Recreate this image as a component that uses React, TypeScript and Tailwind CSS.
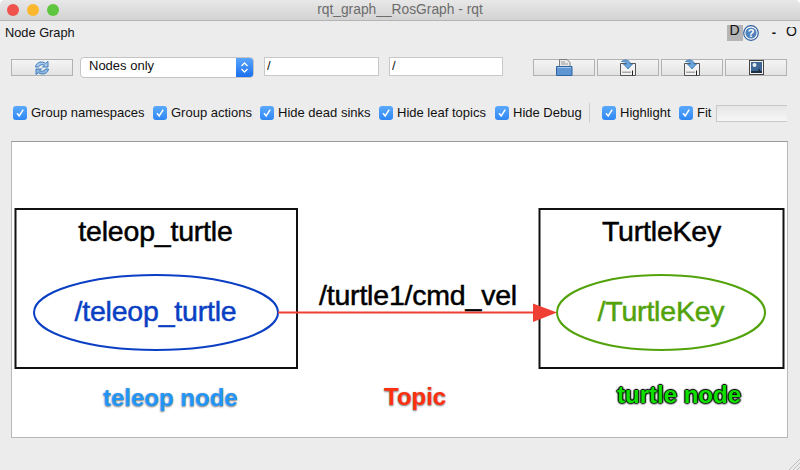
const uiFont = "font-['Liberation_Sans',Arial,sans-serif]";

const filters = [
  { label: 'Group namespaces', width: 'w-[140px]' },
  { label: 'Group actions', width: 'w-[107px]' },
  { label: 'Hide dead sinks', width: 'w-[119px]' },
  { label: 'Hide leaf topics', width: 'w-[116px]' },
  { label: 'Hide Debug', width: 'w-[94px]' },
];

function Checkbox({ label, className }: { label: string; className?: string }) {
  return (
    <div className={`flex items-center ${className ?? ''}`}>
      <span className="flex h-[14px] w-[14px] shrink-0 items-center justify-center rounded-[3px] bg-gradient-to-b from-[#5aa9fb] to-[#2f87f5]">
        <svg width="10" height="10" viewBox="0 0 10 10" fill="none">
          <path d="M2 5.2 4.2 8 8.2 1.6" stroke="#fff" strokeWidth="1.5" />
        </svg>
      </span>
      <span className="ml-[4px] -translate-y-px whitespace-nowrap text-[13px] leading-none text-[#111]">{label}</span>
    </div>
  );
}

function ToolButton({ children }: { children?: React.ReactNode }) {
  return (
    <button
      type="button"
      className="flex h-[17px] w-[62px] items-center justify-center overflow-visible border border-[#b2b2b2] bg-gradient-to-b from-[#f4f4f4] to-[#e3e3e3]"
    >
      {children}
    </button>
  );
}

function RefreshIcon() {
  return (
    <svg width="16" height="16" viewBox="0 0 16 16" fill="none" className="shrink-0">
      <path d="M1.500 7C2 3 6 1 10 2.500l1.500.8L14 1.500v5.500H8.500l2-1.800C8.500 4.200 5.500 4.500 4.500 7Z" fill="#a9c8e8" stroke="#3f7fc0" />
      <path d="M14.500 9C14 13 10 15 6 13.500l-1.500-.8L2 14.500V9h5.500l-2 1.800c2 1 5 .7 6-1.800Z" fill="#8fb6de" stroke="#3f7fc0" />
    </svg>
  );
}

function OpenIcon() {
  return (
    <svg width="17" height="17" viewBox="0 0 17 17" fill="none" className="shrink-0">
      <path d="M3.500 9V.5h7.500l3 3V9Z" fill="#e9e9e9" stroke="#7d7d7d" />
      <path d="M5 3H9M5 5h7" stroke="#999" />
      <path d="M.5 7.500h15.500v9H.5Z" fill="#5f95d2" stroke="#2c62a2" />
      <path d="M1.500 8.500h13.500" stroke="#a5c8ec" />
    </svg>
  );
}

function SaveIcon() {
  return (
    <svg width="16" height="17" viewBox="0 0 16 17" fill="none" className="shrink-0">
      <path d="M.5 4.500h15v12H.5Z" fill="#f2f2f2" stroke="#555" />
      <path d="M2 12.500h9v1.500H2Z" fill="#aaa" />
      <path d="M12.500 11.500v5" stroke="#222" />
      <path d="M1.500 2.500C4 .2 8.500.5 10 3.500V5h2.500L8 10 3.500 5h3V4C5.500 3 3.500 2.500 1.500 2.500Z" fill="#6ba4d8" stroke="#3a78b4" strokeWidth=".8" />
    </svg>
  );
}

function ImageIcon() {
  return (
    <svg width="15" height="15" viewBox="0 0 15 15" fill="none" className="shrink-0">
      <rect x=".5" y=".5" width="14" height="14" fill="#f2f2f2" stroke="#444" />
      <rect x="2" y="2" width="11" height="11" fill="#3f6796" />
      <circle cx="5.500" cy="5" r="2" fill="#e8eef2" />
      <path d="M2 11h7l1-3 1.500 3H13v2H2Z" fill="#1f2f44" />
    </svg>
  );
}

function HelpIcon() {
  return (
    <svg width="16" height="16" viewBox="0 0 16 16" fill="none">
      <circle cx="8" cy="8" r="7.300" fill="#fff" stroke="#2f5f9e" strokeWidth="1.200" />
      <circle cx="8" cy="8" r="5.600" fill="#4f82bd" />
      <text x="8" y="11.800" textAnchor="middle" fontSize="11" fontWeight="700" fill="#fff" fontFamily="Liberation Sans, sans-serif">?</text>
    </svg>
  );
}

function GraphLabel({ x, y, color, children }: { x: number; y: number; color: string; children: string }) {
  return (
    <text
      x={x}
      y={y}
      textAnchor="middle"
      fontFamily="Liberation Sans, Arial, sans-serif"
      fontSize="28.500"
      letterSpacing="-0.2"
      fill={color}
      stroke={color}
      strokeWidth="0.5"
    >
      {children}
    </text>
  );
}

function Graph() {
  return (
    <svg width="776" height="295" viewBox="0 1 776 295" className="block">
      {/* teleop cluster */}
      <rect x="3.500" y="68" width="281.500" height="159" fill="#fff" stroke="#111" strokeWidth="2" />
      <GraphLabel x={143.500} y={100} color="#000">teleop_turtle</GraphLabel>
      <ellipse cx="144" cy="171.500" rx="122" ry="37.500" fill="#fff" stroke="#0a3fc4" strokeWidth="2" />
      <GraphLabel x={143.500} y={180} color="#0a3fc4">/teleop_turtle</GraphLabel>

      {/* turtle cluster */}
      <rect x="527.500" y="68" width="244" height="159" fill="none" stroke="#111" strokeWidth="2" />
      <GraphLabel x={649.500} y={100} color="#000">TurtleKey</GraphLabel>
      <ellipse cx="649" cy="171.500" rx="104" ry="37.500" fill="#fff" stroke="#52a20a" strokeWidth="2" />
      <GraphLabel x={649} y={180} color="#52a20a">/TurtleKey</GraphLabel>

      {/* topic edge */}
      <path d="M266 171.500H522" stroke="#ee4035" strokeWidth="2" />
      <path d="M521 162.500 545 171.500 521 181Z" fill="#ee4035" />
      <GraphLabel x={406} y={164} color="#000">/turtle1/cmd_vel</GraphLabel>
    </svg>
  );
}

export default function App() {
  return (
    <div className={`relative flex h-[470px] w-[800px] flex-col overflow-hidden rounded-t-[5px] bg-[#ececec] ${uiFont}`}>
      {/* title bar */}
      <div className="relative flex h-[21px] shrink-0 items-center justify-center border-b border-[#b4b4b4] bg-gradient-to-b from-[#e8e8e8] to-[#d3d3d3]">
        <div className="absolute left-[7px] top-[4px] flex gap-[8px]">
          <span className="h-[12px] w-[12px] rounded-full bg-[#f0524c]" />
          <span className="h-[12px] w-[12px] rounded-full bg-[#fbb82f]" />
          <span className="h-[12px] w-[12px] rounded-full bg-[#5fc73f]" />
        </div>
        <span className="text-[13.800px] text-[#6c6c6c]">rqt_graph__RosGraph - rqt</span>
      </div>

      {/* dock header */}
      <div className="flex h-[23px] shrink-0 items-center pl-[5px] pr-[2px]">
        <span className="text-[12.800px] text-[#111]">Node Graph</span>
        <div className="ml-auto flex items-center">
          <span className="flex h-[16px] w-[16px] items-start justify-center overflow-hidden bg-[#b5b5b5] text-[14px] leading-[11px] text-[#111]">D</span>
          <HelpIcon />
          <span className="ml-[13px] text-[13px] font-bold leading-none text-[#111]">-</span>
          <span className="ml-[10px] h-[12px] w-[12px] overflow-hidden text-[14px] leading-[9px] text-[#111]">O</span>
        </div>
      </div>

      {/* graph controls */}
      <div className="mt-[13px] flex h-[21px] shrink-0 items-center pl-[11px]">
        <ToolButton><RefreshIcon /></ToolButton>
        <div className="ml-[7px] flex h-[21px] w-[174px] items-stretch overflow-hidden rounded-[4px] border border-[#c4c4c4] bg-white">
          <span className="flex-1 pl-[8px] text-[13px] leading-[15px] text-[#111]">Nodes only</span>
          <span className="flex w-[17px] items-center justify-center bg-gradient-to-b from-[#59a4fb] to-[#1a6ff0]">
            <svg width="9" height="13" viewBox="0 0 9 13" fill="none">
              <path d="M1.500 5 4.500 2l3 3M1.500 8l3 3 3-3" stroke="#fff" strokeWidth="1.300" />
            </svg>
          </span>
        </div>
        <input readOnly value="/" className="ml-[10px] h-[19px] w-[115px] -translate-y-px border border-[#c8c8c8] bg-white px-[2px] pb-[2px] text-[13px] leading-none text-[#111] outline-none" />
        <input readOnly value="/" className="ml-[10px] h-[19px] w-[114px] -translate-y-px border border-[#c8c8c8] bg-white px-[2px] pb-[2px] text-[13px] leading-none text-[#111] outline-none" />
        <div className="ml-[30px] flex gap-[2px]">
          <ToolButton><OpenIcon /></ToolButton>
          <ToolButton><SaveIcon /></ToolButton>
          <ToolButton><SaveIcon /></ToolButton>
          <ToolButton><ImageIcon /></ToolButton>
        </div>
      </div>

      {/* filter row */}
      <div className="mt-[24px] flex h-[22px] shrink-0 items-center pl-[13px]">
        {filters.map((item) => (
          <Checkbox key={item.label} label={item.label} className={item.width} />
        ))}
        <span className="h-[20px] w-px bg-[#cfcfcf]" />
        <Checkbox label="Highlight" className="ml-[12px] w-[77px]" />
        <Checkbox label="Fit" className="w-[37px]" />
        <div className="h-[17px] w-[71px] border border-r-0 border-[#c8c8c8] bg-gradient-to-b from-[#e6e6e6] to-[#f6f6f6]" />
      </div>

      {/* canvas */}
      <div className="relative mx-[11px] mt-[17px] h-[297px] w-[777px] border border-[#b8b8b8] border-t-[#999] bg-white">
        <Graph />
        <span className="absolute left-[91px] top-[244px] text-[24px] font-bold leading-none text-[#2196f8] [text-shadow:0_1px_2px_#777,0_0_1px_#ccc]">teleop node</span>
        <span className="absolute left-[372px] top-[243px] text-[24px] font-bold leading-none text-[#ff3010] [text-shadow:0_1px_2px_#777,0_0_1px_#ccc]">Topic</span>
        <span className="absolute left-[605px] top-[241px] text-[24px] font-bold leading-none text-[#10e000] [text-shadow:0_0_2px_#000,0_1px_2px_#000,1px_0_1px_#000,-1px_0_1px_#000,0_-1px_1px_#000]">turtle node</span>
      </div>

      {/* size grip */}
      <svg width="12" height="12" viewBox="0 0 12 12" className="absolute bottom-0 right-0" fill="none">
        <path d="M1 12 12 1M5 12l7-7M9 12l3-3" stroke="#bdbdbd" />
      </svg>
    </div>
  );
}
